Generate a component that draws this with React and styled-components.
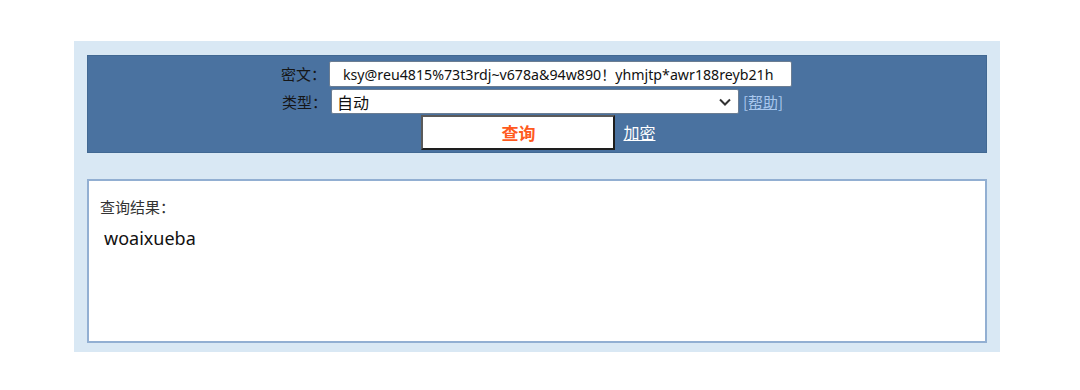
import styled, { createGlobalStyle } from "styled-components";

const GlobalStyle = createGlobalStyle`
  body {
    margin: 0;
    background: #ffffff;
    font-family: "Noto Sans", "Noto Sans CJK SC", sans-serif;
  }
`;

const Page = styled.div`
  padding: 41px 0 0 74px;
`;

const Frame = styled.div`
  width: 926px;
  height: 311px;
  box-sizing: border-box;
  background: #d9e8f4;
  padding: 14px 13px 9px;
  display: flex;
  flex-direction: column;
  gap: 26px;
`;

const Header = styled.div`
  height: 98px;
  box-sizing: border-box;
  background: #4a72a0;
  border: 1px solid #416892;
  padding-top: 3px;
  display: flex;
  flex-direction: column;
  align-items: center;
`;

const Row = styled.div`
  display: flex;
  align-items: center;
  gap: ${(p) => p.$gap || 3}px;
  margin-left: ${(p) => p.$shift || 0}px;
  height: ${(p) => p.$h}px;
`;

const Label = styled.span`
  font-family: "Noto Sans CJK SC", sans-serif;
  font-size: 15px;
  color: #161616;
`;

const TextInput = styled.div`
  width: 463px;
  height: 26px;
  box-sizing: border-box;
  background: #fff;
  border: 1px solid #6b7d92;
  border-radius: 2px;
  padding-left: 13px;
  display: flex;
  align-items: center;
  font-size: 14.2px;
  color: #111;
  white-space: nowrap;
`;

const SelectBox = styled.div`
  width: 408px;
  height: 25px;
  box-sizing: border-box;
  background: #fff;
  border: 1px solid #6b7d92;
  border-radius: 2px;
  padding: 0 6px 0 5px;
  display: flex;
  align-items: center;
  justify-content: space-between;
  font-family: "Noto Sans CJK SC", sans-serif;
  font-size: 16px;
  color: #111;
`;

const Link = styled.a`
  font-family: "Noto Sans CJK SC", sans-serif;
  font-size: ${(p) => p.$size || 15}px;
  color: ${(p) => p.$color || "#fff"};
  text-decoration: underline;
  cursor: pointer;
`;

const QueryButton = styled.button`
  width: 194px;
  height: 35px;
  box-sizing: border-box;
  background: #fff;
  border: 2px solid;
  border-color: #5a5a5a #1e1e1e #1e1e1e #5a5a5a;
  font-family: "Noto Sans CJK SC", sans-serif;
  font-size: 17px;
  font-weight: 700;
  color: #ff5a1e;
  padding: 0;
`;

const ResultBox = styled.div`
  flex: 1;
  box-sizing: border-box;
  background: #fff;
  border: 2px solid #92afd2;
  padding: 15px 11px;
`;

const ResultTitle = styled.div`
  font-family: "Noto Sans CJK SC", sans-serif;
  font-size: 15px;
  color: #333;
`;

const ResultText = styled.div`
  margin: 9px 0 0 4px;
  font-size: 18px;
  color: #111;
`;

const Chevron = () => (
  <svg width="14" height="10" viewBox="0 0 14 10">
    <path d="M2 2.5 L7 7.5 L12 2.5" fill="none" stroke="#333" strokeWidth="2" />
  </svg>
);

export default function App() {
  return (
    <>
      <GlobalStyle />
      <Page>
        <Frame>
          <Header>
            <Row $h={29} $shift={-1}>
              <Label>密文：</Label>
              <TextInput>ksy@reu4815%73t3rdj~v678a&94w890！yhmjtp*awr188reyb21h</TextInput>
            </Row>
            <Row $h={27} $gap={4} $shift={-9}>
              <Label>类型：</Label>
              <SelectBox>
                <span>自动</span>
                <Chevron />
              </SelectBox>
              <Link $color="#a9c8ee">[帮助]</Link>
            </Row>
            <Row $h={34} $gap={8} $shift={3}>
              <QueryButton>查询</QueryButton>
              <Link $size={16}>加密</Link>
            </Row>
          </Header>
          <ResultBox>
            <ResultTitle>查询结果：</ResultTitle>
            <ResultText>woaixueba</ResultText>
          </ResultBox>
        </Frame>
      </Page>
    </>
  );
}
